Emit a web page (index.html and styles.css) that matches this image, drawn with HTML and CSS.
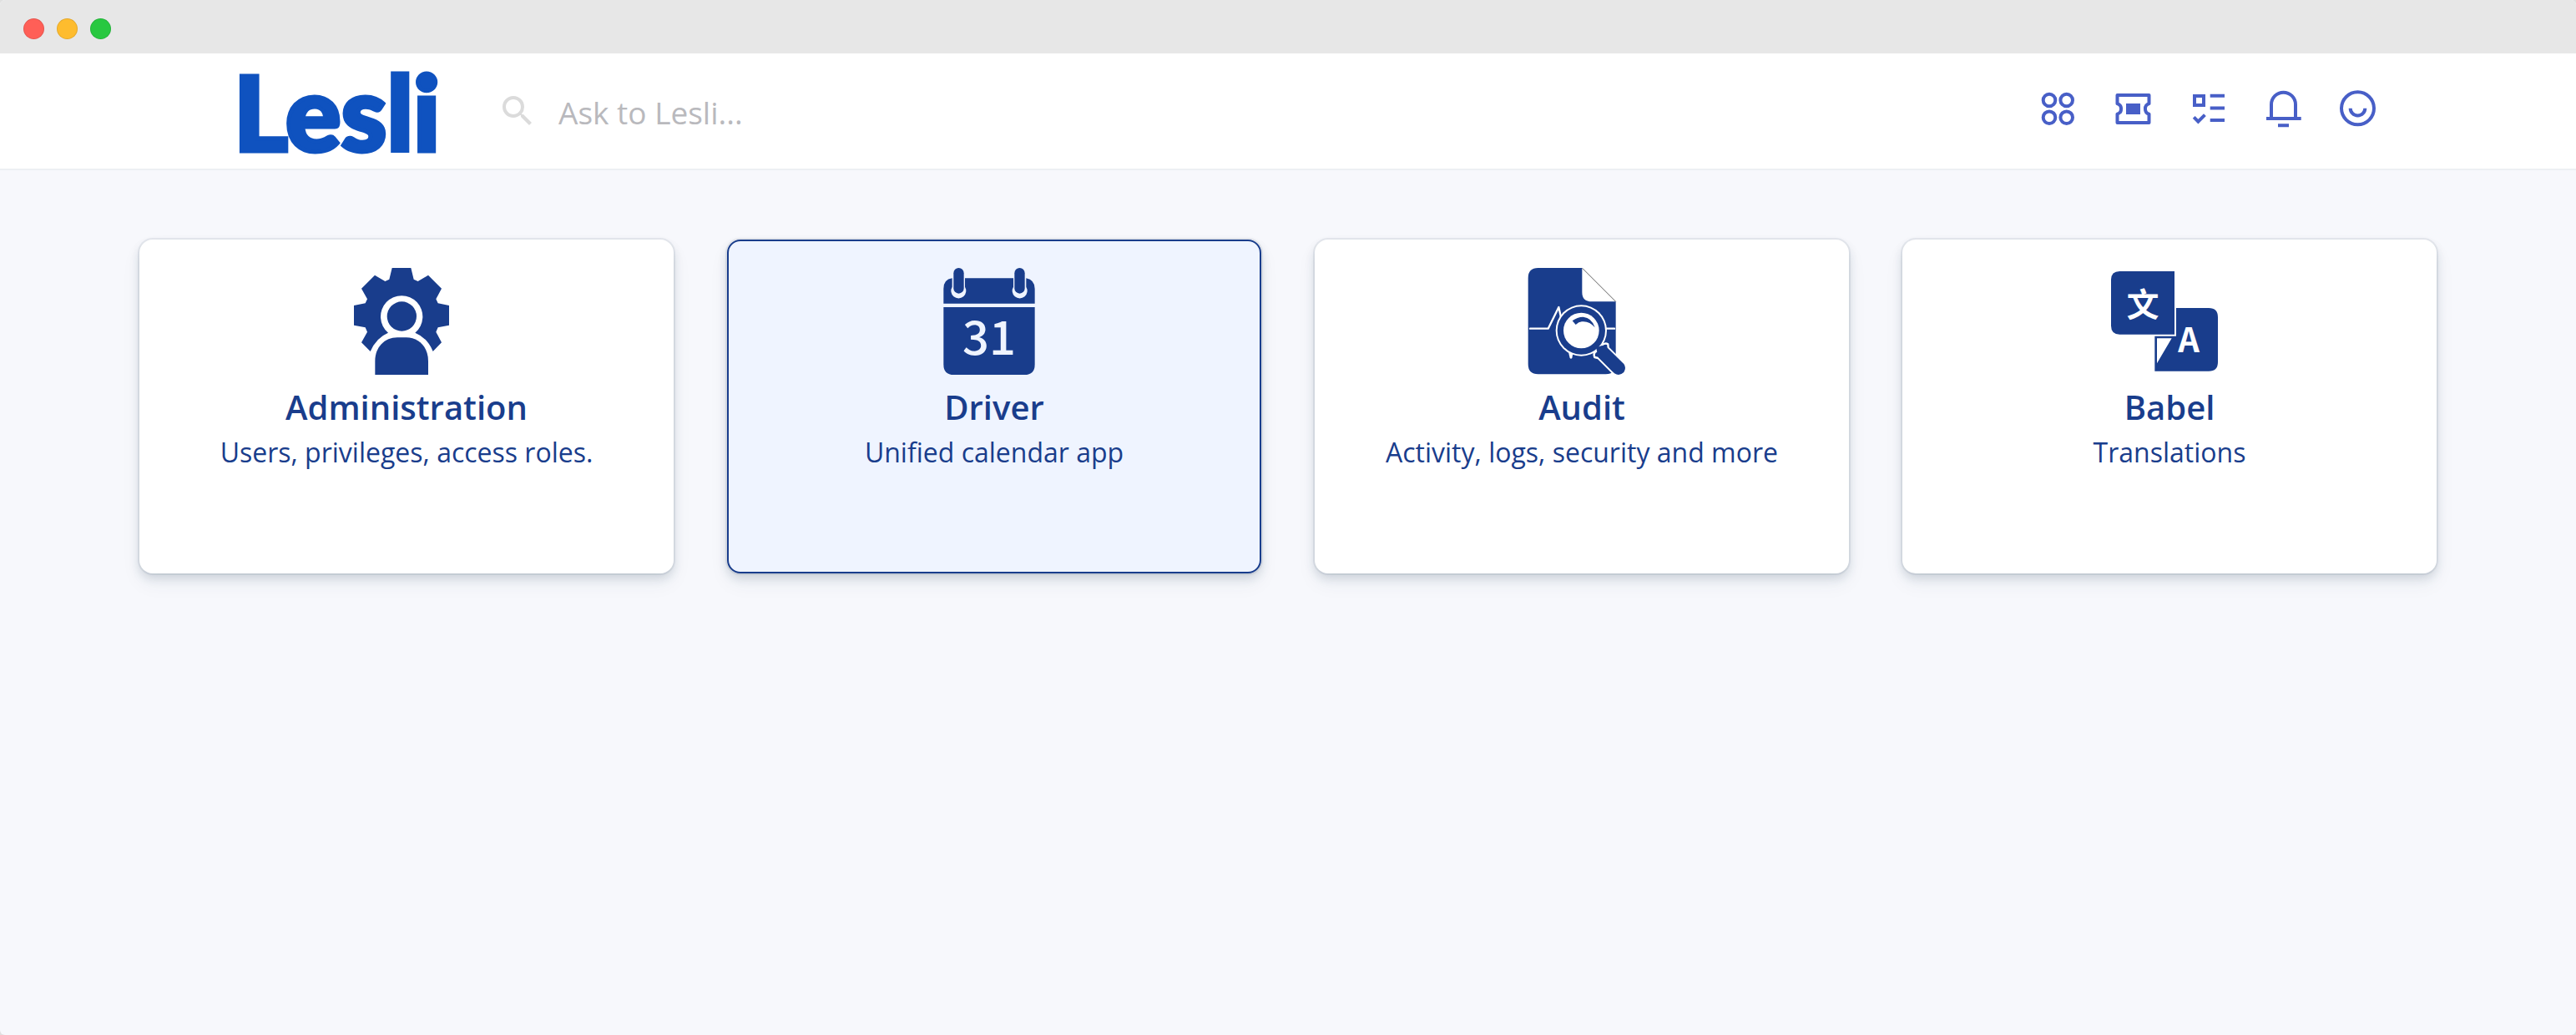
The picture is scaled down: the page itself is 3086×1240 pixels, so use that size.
FILE: index.html
```html
<!DOCTYPE html>
<html lang="en">
<head>
<meta charset="utf-8">
<meta name="viewport" content="width=device-width, initial-scale=1">
<title>Lesli</title>
<link rel="stylesheet" href="styles.css">
</head>
<body>
<div class="window">
  <div class="titlebar">
    <span class="light light-close"></span>
    <span class="light light-minimize"></span>
    <span class="light light-zoom"></span>
  </div>

  <header class="header">
    <a class="logo" href="#">Lesli</a>
    <form class="search" role="search">
      <label class="search-label" for="search" aria-label="Search">
        <svg class="search-icon" viewBox="0 0 24 24" aria-hidden="true"><path d="M15.5 14h-.79l-.28-.27A6.47 6.47 0 0 0 16 9.500 6.500 6.500 0 1 0 9.500 16c1.610 0 3.090-.59 4.230-1.570l.27.28v.79l5 4.990L20.490 19l-4.990-5zm-6 0C7.010 14 5 11.990 5 9.500S7.010 5 9.500 5 14 7.010 14 9.500 11.990 14 9.500 14z"/></svg>
      </label>
      <input class="search-input" id="search" type="text" placeholder="Ask to Lesli...">
    </form>
    <nav class="nav">
      <button class="nav-button" type="button" aria-label="Apps">
        <svg viewBox="0 0 52 52"><circle cx="15" cy="16" r="7.300"/><circle cx="35.700" cy="16" r="7.300"/><circle cx="15" cy="36.700" r="7.300"/><circle cx="35.700" cy="36.700" r="7.300"/></svg>
      </button>
      <button class="nav-button" type="button" aria-label="Tickets">
        <svg viewBox="0 0 52 52"><path stroke-linejoin="round" d="M6.500 9.900H44.500V20.200A6.500 6.500 0 0 0 44.500 32.600V43H6.500V32.600A6.500 6.500 0 0 0 6.500 20.200Z"/><path class="solid" d="M17 20h17v13H17z"/></svg>
      </button>
      <button class="nav-button" type="button" aria-label="Tasks">
        <svg viewBox="0 0 52 52"><path d="M9 11h11v11H9zM27.700 10.800H45M27.700 25.500H45M27.700 40H45M8.200 36.400l5.200 5.200 8-8"/></svg>
      </button>
      <button class="nav-button" type="button" aria-label="Notifications">
        <svg viewBox="0 0 52 52"><path d="M11 37V21.200a14.500 14.500 0 0 1 29 0V37M5 38H46.700M19 46.300H32"/></svg>
      </button>
      <button class="nav-button" type="button" aria-label="Profile">
        <svg viewBox="0 0 52 52"><circle cx="24.500" cy="25.800" r="19.500"/><path d="M15.700 25.700a8.800 8.800 0 0 0 17.600 0"/></svg>
      </button>
    </nav>
  </header>

  <main class="apps">
    <a class="card" href="#">
      <svg class="card-icon" viewBox="21 33 384 384" aria-hidden="true">
        <path d="M179 33H247L257 74L272 81L309 59L357 107L337 145L344 160L384 168V239L344 247L337 263L357 301L326 333Q306 284 262 266A75.500 75.500 0 1 0 165 266Q122 284 101 333L69 301L90 263L83 247L42 239V168L83 160L90 145L69 107L117 59L154 81L169 74Z"/>
        <circle cx="214" cy="207" r="53"/>
        <path d="M118 417V368C118 318 152 283 198 283H230C276 283 309 318 309 368V417Z"/>
      </svg>
      <h2 class="card-title">Administration</h2>
      <p class="card-text">Users, privileges, access roles.</p>
    </a>
    <a class="card card-active" href="#">
      <svg class="card-icon" viewBox="33 33 384 384" aria-hidden="true">
        <path d="M61 161V108Q61 74 92 70V101A27 27 0 1 0 138 101V70H312V101A27 27 0 1 0 358 101V70Q389 76 389 108V161Z"/>
        <path d="M61 174H389V380Q389 417 352 417H98Q61 417 61 380Z"/>
        <rect x="97" y="33" width="37" height="92" rx="18.500"/>
        <rect x="316" y="33" width="37" height="92" rx="18.500"/>
        <text class="calendar-day" x="225" y="344">31</text>
      </svg>
      <h2 class="card-title">Driver</h2>
      <p class="card-text">Unified calendar app</p>
    </a>
    <a class="card" href="#">
      <svg class="card-icon" viewBox="135 63 384 384" aria-hidden="true">
        <path d="M188 63H346V150Q346 184 380 184H467V409Q467 445 431 445H188Q152 445 152 409V99Q152 63 188 63Z"/>
        <path class="fold" d="M347 64L467 184"/>
        <path class="pulse" d="M159 281H224L262 204L272 250M430 281H462"/>
        <path class="paper" d="M297 366H314L310 387Q306 391 302 387Z"/>
        <circle class="paper" cx="343" cy="288" r="92"/>
        <path class="handle" d="M399 361Q384 368 391 384L403 387L460 444M414 343Q428 330 439 337L440 350L470 380"/>
        <circle cx="343" cy="288" r="86"/>
        <path d="M396 349L418 342L437 350L496 408Q506 422 496 438Q480 453 462 442L405 385Z"/>
        <circle class="paper" cx="343" cy="288" r="64"/>
        <path d="M311 253Q328 239 350 239Q381 242 392 277Q372 253 345 256Q334 257 323 267Z"/>
      </svg>
      <h2 class="card-title">Audit</h2>
      <p class="card-text">Activity, logs, security and more</p>
    </a>
    <a class="card" href="#">
      <svg class="card-icon" viewBox="117 63 384 384" aria-hidden="true">
        <path d="M148 75H345V302H148Q117 302 117 271V106Q117 75 148 75Z"/>
        <path d="M351 207H468Q501 207 501 240V401Q501 434 468 434H274V308H351Z"/>
        <path class="paper" d="M282 316H335L282 406Z"/>
        <text class="glyph-cjk" x="231" y="238">文</text>
        <text class="glyph-latin" x="396" y="366">A</text>
      </svg>
      <h2 class="card-title">Babel</h2>
      <p class="card-text">Translations</p>
    </a>
  </main>
</div>
</body>
</html>
```
FILE: styles.css
```css
:root {
  --navy: #193d8c;
  --brand: #0f52bf;
  --link: #485fc7;
}

* {
  box-sizing: border-box;
}

body {
  margin: 0;
  background: #e0e0e0;
  font-family: "Open Sans", "Noto Sans", sans-serif;
}

.window {
  min-height: 100vh;
  overflow: hidden;
  border-radius: 6px;
  background: #f7f8fc;
}

.titlebar {
  display: flex;
  align-items: center;
  gap: 15px;
  height: 64px;
  padding: 4px 28px 0;
  background: #e7e7e7;
}

.light {
  width: 25px;
  height: 25px;
  border: 1px solid rgba(0, 0, 0, 0.1);
  border-radius: 50%;
}

.light-close { background: #ff5f57; }
.light-minimize { background: #febc2e; }
.light-zoom { background: #28c840; }

.header {
  display: flex;
  align-items: center;
  height: 140px;
  padding: 0 234px 0 280px;
  border-bottom: 2px solid #edeff3;
  background: #fff;
}

.logo {
  width: 316px;
  color: var(--brand);
  font-family: Lato, "Open Sans", sans-serif;
  font-size: 124px;
  font-weight: 900;
  line-height: 134px;
  text-decoration: none;
  -webkit-text-stroke: 5px var(--brand);
}

.search {
  display: flex;
  flex: 1;
  align-items: center;
  gap: 25px;
}

.search-label {
  display: flex;
}

.search-icon {
  width: 48px;
  height: 48px;
  fill: #dbdbdb;
}

.search-input {
  flex: 1;
  min-width: 0;
  padding: 3px 0 0;
  border: 0;
  outline: 0;
  background: none;
  color: #363636;
  font: 37px/50px "Open Sans", "Noto Sans", sans-serif;
}

.search-input::placeholder {
  color: #b9b9bd;
  opacity: 1;
}

.nav {
  display: flex;
  gap: 38px;
  padding-bottom: 6px;
}

.nav-button {
  width: 52px;
  height: 52px;
  padding: 0;
  border: 0;
  background: none;
  cursor: pointer;
}

.nav-button svg {
  display: block;
  fill: none;
  stroke: var(--link);
  stroke-width: 4;
}

.nav-button .solid {
  fill: var(--link);
  stroke: none;
}

.apps {
  display: grid;
  grid-template-columns: repeat(4, 1fr);
  gap: 64px;
  padding: 83px 167px;
}

.card {
  --surface: #fff;
  display: flex;
  flex-direction: column;
  align-items: center;
  min-height: 400px;
  padding: 34px 24px;
  border-radius: 16px;
  background: var(--surface);
  box-shadow: 0 0 0 2px rgba(40, 60, 90, 0.08), 0 6px 12px rgba(40, 60, 90, 0.16), 0 12px 24px rgba(40, 60, 90, 0.06);
  color: var(--navy);
  text-align: center;
  text-decoration: none;
}

.card-active {
  --surface: #eff4ff;
  padding: 32px 22px;
  border: 2px solid var(--navy);
}

.card-icon {
  width: 128px;
  height: 128px;
  margin: 0 12px 8px 0;
  fill: var(--navy);
}

.card-icon .paper {
  fill: var(--surface);
}

.card-icon .fold {
  fill: none;
  stroke: #111;
  stroke-width: 2;
}

.card-icon .pulse,
.card-icon .handle {
  fill: none;
  stroke: var(--surface);
  stroke-width: 7;
  stroke-linecap: round;
  stroke-linejoin: round;
}

.card-icon text {
  fill: var(--surface);
  text-anchor: middle;
}

.calendar-day {
  font: 500 168px "Noto Sans CJK SC", sans-serif;
}

.glyph-cjk {
  font: 700 116px "Noto Sans CJK SC", sans-serif;
}

.glyph-latin {
  font: 700 120px "Noto Sans CJK SC", sans-serif;
}

.card-title {
  margin: 0;
  font-size: 40px;
  font-weight: 600;
  line-height: 62px;
}

.card-text {
  margin: 0;
  font-size: 32px;
  line-height: 46px;
}
```
